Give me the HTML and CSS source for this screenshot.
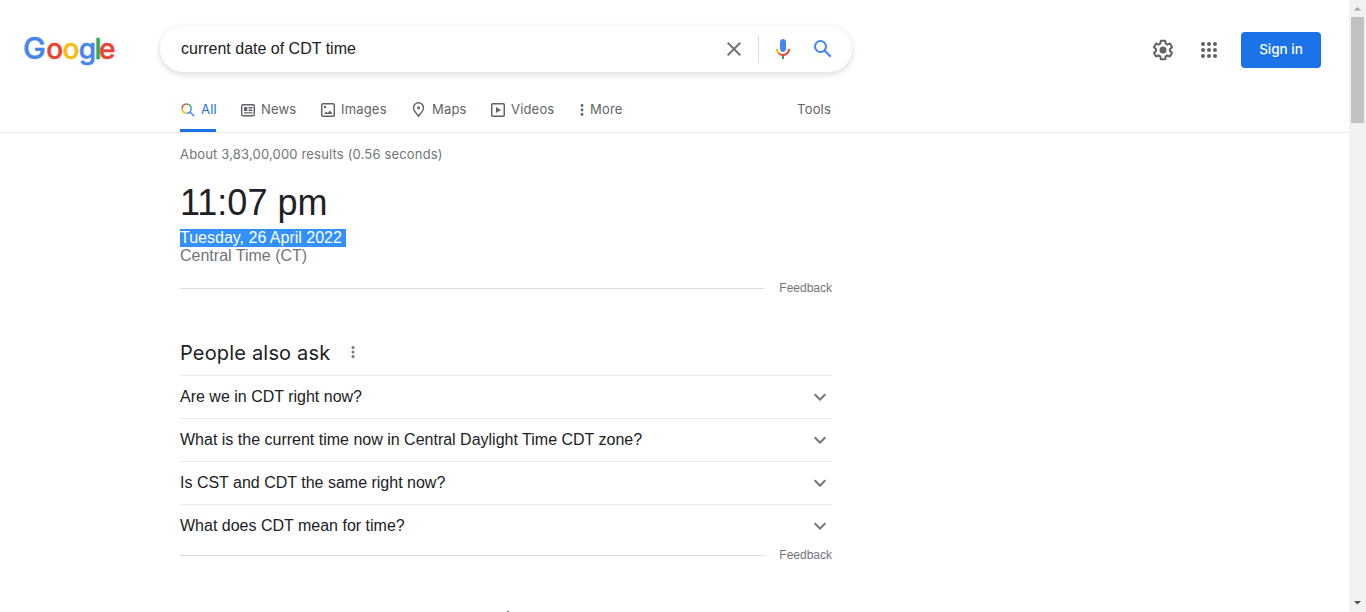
FILE: index.html
```html
<!DOCTYPE html>
<html lang="en">
<head>
<meta charset="utf-8">
<title>current date of CDT time - Google Search</title>
<link rel="stylesheet" href="styles.css">
</head>
<body>
<div class="page">
  <header class="header">
    <div class="topbar">
      <svg class="logo" width="96" height="44" viewBox="0 0 96 44" role="img" aria-label="Google">
        <text class="logo-text" y="32.300"><tspan class="blue" x="1" font-size="30.500">G</tspan><tspan class="red" x="24.300">o</tspan><tspan class="yellow" x="40.600">o</tspan><tspan class="blue" x="56.700">g</tspan><tspan class="green" x="72.500">l</tspan><tspan class="red" x="77">e</tspan></text>
      </svg>
      <div class="search">
        <span class="query">current date of CDT time</span>
        <svg class="clear" width="24" height="24" viewBox="0 0 24 24"><path fill="#70757a" d="M19 6.41 17.59 5 12 10.59 6.41 5 5 6.41 10.59 12 5 17.59 6.41 19 12 13.41 17.59 19 19 17.59 13.41 12z"/></svg>
        <span class="divider"></span>
        <svg class="mic" width="24" height="24" viewBox="0 0 24 24"><path fill="#4285f4" d="M12 15c1.66 0 3-1.31 3-2.97V5c0-1.66-1.34-3-3-3S9 3.36 9 5.020v7.020C9 13.700 10.340 15 12 15z"/><path fill="#34a853" d="M11 18.080h2V22h-2z"/><path fill="#fbbc04" d="M7.050 16.870C5.780 15.600 5 13.960 5 12h2c0 1.450.560 2.420 1.470 3.380v.320l-1.150 1.180z"/><path fill="#ea4335" d="M12 16.930a4.970 4.970 0 0 1-3.540-1.550l-1.410 1.490C8.310 18.140 9.920 19 12 19c3.870 0 6.990-2.920 6.990-7h-1.990c0 2.920-2.240 4.930-5 4.930z"/></svg>
        <svg class="lens" width="24" height="24" viewBox="0 0 24 24"><path fill="#4285f4" d="M20.490 19l-5.730-5.730C15.530 12.200 16 10.910 16 9.500A6.500 6.500 0 1 0 9.500 16c1.410 0 2.700-.470 3.770-1.240L19 20.490 20.490 19zM5 9.500C5 7.010 7.010 5 9.500 5S14 7.010 14 9.500 11.990 14 9.500 14 5 11.990 5 9.500z"/></svg>
      </div>
      <div class="account">
        <svg class="gear" width="24" height="24" viewBox="0 0 24 24"><path fill="#5f6368" d="M13.850 22.250h-3.700c-.740 0-1.360-.540-1.450-1.270l-.270-1.890c-.270-.140-.530-.290-.790-.460l-1.800.720c-.700.260-1.470-.030-1.810-.650L2.200 15.530c-.350-.660-.200-1.440.360-1.880l1.530-1.190c-.010-.150-.020-.300-.020-.460 0-.150.010-.310.020-.460l-1.520-1.190c-.590-.450-.740-1.260-.370-1.880l1.850-3.190c.340-.620 1.110-.900 1.790-.630l1.810.730c.260-.170.520-.320.780-.460l.270-1.910c.090-.700.710-1.250 1.440-1.250h3.700c.740 0 1.360.540 1.450 1.270l.270 1.890c.270.140.530.290.790.460l1.800-.720c.710-.260 1.480.030 1.820.650l1.840 3.180c.360.660.200 1.440-.360 1.880l-1.520 1.190c.010.150.020.300.020.460s-.010.310-.020.460l1.520 1.190c.560.450.720 1.230.370 1.860l-1.860 3.220c-.340.620-1.110.900-1.800.630l-1.800-.720c-.260.170-.520.320-.780.460l-.270 1.910c-.100.680-.720 1.220-1.460 1.220zm-3.230-2h2.760l.370-2.550.530-.220c.440-.180.880-.440 1.340-.780l.450-.340 2.380.960 1.380-2.400-2.030-1.580.070-.560c.030-.260.060-.510.060-.780s-.030-.530-.060-.780l-.070-.560 2.030-1.580-1.390-2.400-2.390.960-.450-.350c-.420-.320-.870-.580-1.330-.770l-.520-.220-.370-2.550h-2.760l-.370 2.550-.530.210c-.440.190-.880.440-1.340.790l-.450.330-2.380-.950-1.390 2.390 2.030 1.580-.070.560a7 7 0 0 0-.060.790c0 .260.020.530.060.780l.070.560-2.030 1.580 1.380 2.400 2.390-.960.450.350c.430.330.860.580 1.330.770l.530.220z"/><circle cx="12" cy="12" r="3.500" fill="#5f6368"/></svg>
        <svg class="apps" width="24" height="24" viewBox="0 0 24 24" fill="#5f6368"><circle cx="6" cy="6" r="2"/><circle cx="12" cy="6" r="2"/><circle cx="18" cy="6" r="2"/><circle cx="6" cy="12" r="2"/><circle cx="12" cy="12" r="2"/><circle cx="18" cy="12" r="2"/><circle cx="6" cy="18" r="2"/><circle cx="12" cy="18" r="2"/><circle cx="18" cy="18" r="2"/></svg>
        <a class="signin">Sign in</a>
      </div>
    </div>
    <nav class="tabs">
      <a class="tab tab-all active"><svg width="16" height="16" viewBox="0 0 16 16" fill="none" stroke-width="1.500"><path stroke="#ea4335" d="M2 6.500A4.700 4.700 0 0 1 6.500 1.900"/><path stroke="#34a853" d="M6.500 1.900A4.700 4.700 0 0 1 11.200 6.600"/><path stroke="#4285f4" d="M11.200 6.600A4.700 4.700 0 0 1 6.600 11.300M10 10l4.300 4.300"/><path stroke="#fbbc04" d="M6.600 11.300A4.600 4.600 0 0 1 2 6.500"/></svg><span>All</span></a>
      <a class="tab tab-news"><svg width="16" height="16" viewBox="0 0 16 16" fill="none" stroke="#5f6368" stroke-width="1.400"><rect x="1.700" y="2.700" width="12.600" height="11" rx="1.300"/><path d="M8.500 5.700h4M8.500 8.200h4M4 10.900h8.500"/><path fill="#5f6368" stroke="none" d="M4 5h3.300v4H4z"/></svg><span>News</span></a>
      <a class="tab tab-images"><svg width="16" height="16" viewBox="0 0 16 16" fill="none" stroke="#5f6368" stroke-width="1.500"><rect x="1.700" y="1.700" width="12.600" height="12.600" rx="1.300"/><path fill="#5f6368" stroke="none" d="M4 12l2-2.500 1.700 1.500L10 8.500l2.500 3.500zM4 4h2v2H4z"/></svg><span>Images</span></a>
      <a class="tab tab-maps"><svg width="16" height="16" viewBox="0 0 16 16" fill="none" stroke="#5f6368" stroke-width="1.400"><path d="M7.500 14.200C6 11.700 2.500 9 2.500 5.700a5 5 0 0 1 10 0c0 3.300-3.500 6-5 8.500z"/><circle cx="7.500" cy="5.700" r="1.500" fill="#5f6368" stroke="none"/></svg><span>Maps</span></a>
      <a class="tab tab-videos"><svg width="16" height="16" viewBox="0 0 16 16" fill="none" stroke="#5f6368" stroke-width="1.500"><rect x="1.700" y="1.700" width="12.600" height="12.600" rx="1"/><path fill="#5f6368" stroke="none" d="M6 5l5 3-5 3z"/></svg><span>Videos</span></a>
      <a class="tab tab-more"><svg width="4" height="16" viewBox="0 0 4 16" fill="#5f6368"><circle cx="2" cy="3.500" r="1.400"/><circle cx="2" cy="8" r="1.400"/><circle cx="2" cy="12.500" r="1.400"/></svg><span>More</span></a>
      <a class="tab tab-tools"><span>Tools</span></a>
    </nav>
  </header>
  <main class="results">
    <div class="stats">About 3,83,00,000 results (0.56 seconds)</div>
    <section class="clock">
      <div class="time">11:07 pm</div>
      <div class="date"><span class="selected">Tuesday, 26 April 2022 </span></div>
      <div class="zone">Central Time (CT)</div>
    </section>
    <div class="feedback"><span class="rule"></span><a>Feedback</a></div>
    <section class="ask">
      <h2 class="ask-title"><span>People also ask</span><svg width="4" height="12" viewBox="0 0 4 12" fill="#70757a"><circle cx="2" cy="1.500" r="1.500"/><circle cx="2" cy="6" r="1.500"/><circle cx="2" cy="10.500" r="1.500"/></svg></h2>
      <div class="question"><span>Are we in CDT right now?</span><svg width="24" height="24" viewBox="0 0 24 24"><path fill="#70757a" d="M16.590 8.590 12 13.170 7.410 8.590 6 10l6 6 6-6z"/></svg></div>
      <div class="question"><span>What is the current time now in Central Daylight Time CDT zone?</span><svg width="24" height="24" viewBox="0 0 24 24"><path fill="#70757a" d="M16.590 8.590 12 13.170 7.410 8.590 6 10l6 6 6-6z"/></svg></div>
      <div class="question"><span>Is CST and CDT the same right now?</span><svg width="24" height="24" viewBox="0 0 24 24"><path fill="#70757a" d="M16.590 8.590 12 13.170 7.410 8.590 6 10l6 6 6-6z"/></svg></div>
      <div class="question"><span>What does CDT mean for time?</span><svg width="24" height="24" viewBox="0 0 24 24"><path fill="#70757a" d="M16.590 8.590 12 13.170 7.410 8.590 6 10l6 6 6-6z"/></svg></div>
    </section>
    <div class="feedback feedback-ask"><span class="rule"></span><a>Feedback</a></div>
    <div class="next-item"></div>
  </main>
</div>
<div class="scrollbar">
  <svg width="17" height="17" viewBox="0 0 17 17"><path fill="#a3a3a3" d="M5 10.500h7L8.500 7z"/></svg>
  <span class="thumb"></span>
  <svg width="17" height="17" viewBox="0 0 17 17"><path fill="#505050" d="M5 6h7L8.500 9.500z"/></svg>
</div>
</body>
</html>
```
FILE: styles.css
```css
* { box-sizing: border-box; }
body {
  margin: 0;
  display: flex;
  height: 612px;
  overflow: hidden;
  background: #fff;
  color: #202124;
  font-family: "Liberation Sans", Arial, sans-serif;
}
svg { display: block; flex: none; }
.page { width: 1349px; height: 612px; overflow: hidden; }
.header { height: 133px; border-bottom: 1px solid #ebebeb; }
.topbar { display: flex; height: 91px; padding: 26px 28px 0 22px; }
.logo { margin-top: 1px; }
.logo-text { font-family: Inter, sans-serif; font-size: 28px; font-weight: 500; stroke-width: .5px; }
.blue { fill: #4285f4; stroke: #4285f4; }
.red { fill: #ea4335; stroke: #ea4335; }
.yellow { fill: #fbbc05; stroke: #fbbc05; }
.green { fill: #34a853; stroke: #34a853; }
.search {
  display: flex;
  align-items: center;
  width: 692px;
  height: 46px;
  margin-left: 42px;
  padding: 0 17px 0 21px;
  border-radius: 24px;
  box-shadow: 0 2px 5px 1px rgba(64, 60, 67, .16);
}
.query { flex: 1; font-size: 16px; line-height: 20px; padding-bottom: 1px; }
.divider { width: 1px; height: 28px; margin: 0 12px; background: #dadce0; }
.lens { margin-left: 16px; }
.account { display: flex; align-items: center; height: 48px; margin-left: auto; }
.apps { margin-left: 22px; }
.signin {
  width: 80px;
  height: 36px;
  margin-left: 20px;
  border-radius: 4px;
  background: #1a73e8;
  color: #fff;
  font: 500 13.5px/35px Inter, sans-serif;
  text-align: center;
}
.tabs {
  display: flex;
  height: 41px;
  width: 831px;
  padding-left: 180px;
  color: #5f6368;
  font: 400 13px/37px Inter, sans-serif;
  letter-spacing: .18px;
}
.tab { display: flex; gap: 5px; white-space: nowrap; }
.tab svg { margin-top: 11px; }
.active { width: 36px; border-bottom: 3px solid #1a73e8; color: #1a73e8; }
.tab-news { margin-left: 24px; width: 80px; }
.tab-images { width: 91px; }
.tab-maps { width: 79px; }
.tab-videos { width: 90px; }
.tab-more { gap: 6px; }
.tab-tools { margin-left: auto; }
.results { width: 832px; padding-left: 180px; }
.stats { height: 51px; color: #70757a; font: 400 13px/43px Inter, sans-serif; letter-spacing: .17px; }
.time { height: 45px; font-size: 36px; line-height: 38px; }
.date { height: 18px; font-size: 16px; line-height: 18px; white-space: pre; }
.selected { display: inline-block; height: 18px; background: #3390ff; color: #fff; }
.zone { height: 18px; font-size: 16px; line-height: 18px; color: #70757a; }
.feedback {
  display: flex;
  align-items: center;
  gap: 14px;
  height: 16px;
  margin-top: 15px;
  color: #70757a;
  font-size: 12px;
  line-height: 16px;
}
.rule { flex: 1; height: 1px; margin-top: 1px; background: #dadce0; }
.ask { margin-top: 43px; }
.ask-title {
  display: flex;
  align-items: center;
  gap: 21px;
  height: 36px;
  margin: 0;
  padding-bottom: 11px;
  font: 400 20px/26px Inter, sans-serif;
  letter-spacing: .18px;
}
.ask-title span { padding-top: 2px; }
.question {
  display: flex;
  align-items: center;
  justify-content: space-between;
  height: 43px;
  border-top: 1px solid #ebebeb;
  font-size: 16px;
  line-height: 20px;
}
.feedback-ask { margin-top: 0; }
.next-item { width: 2px; height: 1px; margin: 48px 0 0 327px; background: #70757a; }
.scrollbar { display: flex; flex-direction: column; width: 17px; height: 612px; background: #f1f1f1; }
.thumb { width: 13px; height: 106px; margin: 0 2px auto; background: #c1c1c1; }
```
